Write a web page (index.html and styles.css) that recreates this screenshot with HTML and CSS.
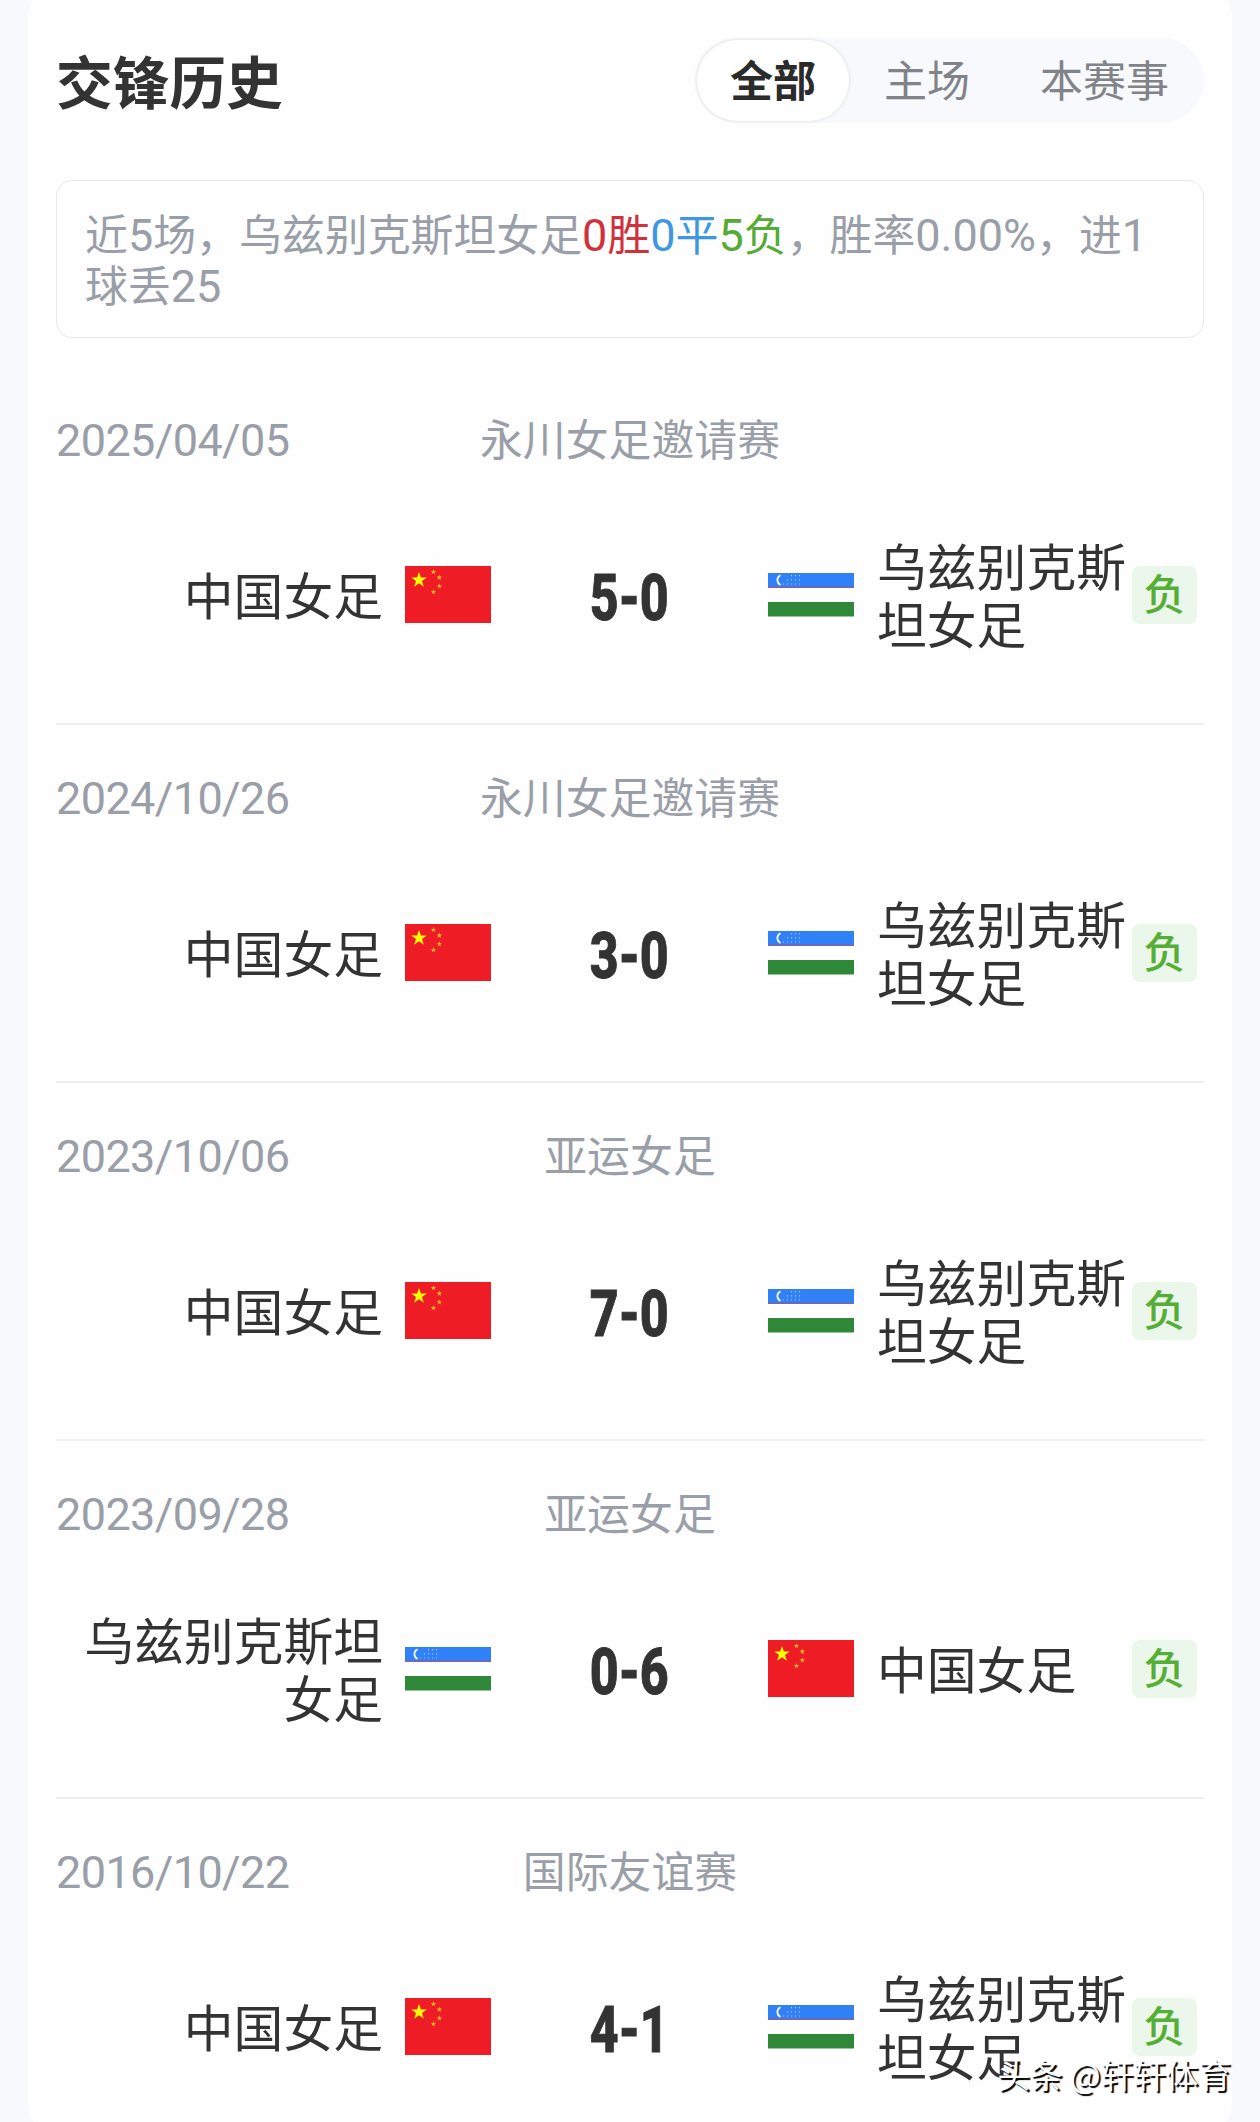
FILE: index.html
```html
<!DOCTYPE html>
<html lang="zh-CN">
<head>
  <meta charset="UTF-8" />
  <meta name="viewport" content="width=device-width, initial-scale=1.0"/>
  <title>交锋历史</title>
  <link rel="stylesheet" href="styles.css">
</head>
<body>

  <!-- Flags, reused in every match row -->
  <svg class="sprite" aria-hidden="true">
    <symbol id="flag-cn" viewBox="0 0 86 57">
      <rect width="86" height="57" fill="#ee1c25"/>
      <g fill="#ffff00">
        <path d="M14 6 15.9 11.6 21.8 11.6 17 15 18.8 20.8 14 17.3 9.2 20.8 11 15 6.2 11.6 12.1 11.6z"/>
      </g>
      <g fill="#fbb52b">
        <path id="star" d="M28.5 3 29.2 5 31.3 5 29.6 6.3 30.2 8.3 28.5 7.1 26.8 8.3 27.4 6.3 25.7 5 27.8 5z"/>
        <use href="#star" x="5.8" y="5.6"/>
        <use href="#star" x="5.8" y="14.2"/>
        <use href="#star" y="20"/>
      </g>
    </symbol>
    <symbol id="flag-uz" viewBox="0 0 86 57">
      <rect width="86" height="57" fill="#fff"/>
      <rect y="7" width="86" height="14" fill="#3080f8"/>
      <rect y="20.5" width="86" height="1.5" fill="#7a62ae"/>
      <rect y="36" width="86" height="14.5" fill="#2f8837"/>
      <path d="M12.5 9.2A5.4 5.4 0 0 0 12.5 19" fill="none" stroke="#fff" stroke-width="1.7"/>
      <g stroke="#a8ccff" stroke-width="1.1" stroke-dasharray="1.2 3">
        <path d="M23.5 9v11M27.5 9v11M31.5 9v11M19.5 13.2v7M15.5 17.4v2"/>
      </g>
    </symbol>
  </svg>

  <div class="page">
    <section class="card">

      <!-- Title and filter -->
      <header class="card-header">
        <h2>交锋历史</h2>
        <nav class="tabs">
          <span class="tab active">全部</span>
          <span class="tab">主场</span>
          <span class="tab">本赛事</span>
        </nav>
      </header>

      <!-- Summary -->
      <p class="summary">近<span class="num">5</span>场，乌兹别克斯坦女足<span class="win"><span class="num">0</span>胜</span><span class="draw"><span class="num">0</span>平</span><span class="lose"><span class="num">5</span>负</span>，胜率<span class="num">0.00%</span>，进<span class="num">1</span><br>球丢<span class="num">25</span></p>

      <!-- Matches -->
      <article class="match">
        <div class="match-info">
          <span class="date">2025/04/05</span>
          <span class="league">永川女足邀请赛</span>
        </div>
        <div class="match-row">
          <div class="team home"><span class="name">中国女足</span><svg class="flag"><use href="#flag-cn"/></svg></div>
          <div class="score"><span>5-0</span></div>
          <div class="team away"><svg class="flag"><use href="#flag-uz"/></svg><span class="name">乌兹别克斯坦女足</span></div>
          <span class="result">负</span>
        </div>
      </article>

      <article class="match">
        <div class="match-info">
          <span class="date">2024/10/26</span>
          <span class="league">永川女足邀请赛</span>
        </div>
        <div class="match-row">
          <div class="team home"><span class="name">中国女足</span><svg class="flag"><use href="#flag-cn"/></svg></div>
          <div class="score"><span>3-0</span></div>
          <div class="team away"><svg class="flag"><use href="#flag-uz"/></svg><span class="name">乌兹别克斯坦女足</span></div>
          <span class="result">负</span>
        </div>
      </article>

      <article class="match">
        <div class="match-info">
          <span class="date">2023/10/06</span>
          <span class="league">亚运女足</span>
        </div>
        <div class="match-row">
          <div class="team home"><span class="name">中国女足</span><svg class="flag"><use href="#flag-cn"/></svg></div>
          <div class="score"><span>7-0</span></div>
          <div class="team away"><svg class="flag"><use href="#flag-uz"/></svg><span class="name">乌兹别克斯坦女足</span></div>
          <span class="result">负</span>
        </div>
      </article>

      <article class="match">
        <div class="match-info">
          <span class="date">2023/09/28</span>
          <span class="league">亚运女足</span>
        </div>
        <div class="match-row">
          <div class="team home"><span class="name">乌兹别克斯坦女足</span><svg class="flag"><use href="#flag-uz"/></svg></div>
          <div class="score"><span>0-6</span></div>
          <div class="team away"><svg class="flag"><use href="#flag-cn"/></svg><span class="name">中国女足</span></div>
          <span class="result">负</span>
        </div>
      </article>

      <article class="match">
        <div class="match-info">
          <span class="date">2016/10/22</span>
          <span class="league">国际友谊赛</span>
        </div>
        <div class="match-row">
          <div class="team home"><span class="name">中国女足</span><svg class="flag"><use href="#flag-cn"/></svg></div>
          <div class="score"><span>4-1</span></div>
          <div class="team away"><svg class="flag"><use href="#flag-uz"/></svg><span class="name">乌兹别克斯坦女足</span></div>
          <span class="result">负</span>
        </div>
      </article>

    </section>

    <div class="watermark">头条 @轩轩体育</div>
  </div>

</body>
</html>
```
FILE: styles.css
```css
* {
  margin: 0;
  padding: 0;
  box-sizing: border-box;
}

body {
  background-color: #f7f9fc;
  color: #333;
  font-family: 'Noto Sans CJK SC', sans-serif;
}

.sprite {
  position: absolute;
  width: 0;
  height: 0;
}

.page {
  position: relative;
  height: 2122px;
  padding: 0 28px;
  overflow: hidden;
}

/* the card runs a little past both ends of the page */
.card {
  height: 2146px;
  margin-top: -12px;
  padding: 50px 28px 0;
  background: #fefefe;
  border-radius: 28px;
}

/* Header */
.card-header {
  display: flex;
  justify-content: space-between;
  align-items: center;
  height: 85px;
  margin-bottom: 57px;
}

.card-header h2 {
  padding-bottom: 3px;
  font-size: 56.7px;
  font-weight: 700;
  line-height: 80px;
}

.tabs {
  display: flex;
  align-items: center;
  height: 85px;
  padding: 2px;
  border-radius: 43px;
  background: #f7f9fc;
}

.tab {
  height: 81px;
  padding: 0 35px;
  font-size: 43px;
  line-height: 77px;
  color: #808388;
}

.tab:last-child {
  padding-right: 33px;
}

.tab.active {
  padding: 0 33px;
  border-radius: 41px;
  background: #fff;
  color: #2b2b2b;
  font-weight: 700;
  box-shadow: 0 0 4px rgba(0, 0, 0, 0.12);
}

/* Summary */
.summary {
  height: 158px;
  margin-bottom: 29px;
  padding: 26px 28px;
  border: 1.5px solid #e9eaec;
  border-radius: 16px;
  color: #9a9ea8;
  font-size: 42.9px;
  line-height: 50px;
  white-space: nowrap;
}

.num,
.date {
  font-family: Roboto, sans-serif;
  font-size: 45px;
  line-height: 1;
}

.date {
  letter-spacing: -0.6px;
}

.win { color: #d0313a; }
.draw { color: #3d97e3; }
.lose { color: #55ab35; }

/* Match */
.match {
  height: 358px;
  padding-top: 40px;
  border-bottom: 2px solid #eeeff0;
}

.match:last-child {
  border-bottom: none;
}

.match-info {
  display: grid;
  grid-template-columns: 1fr auto 1fr;
  align-items: baseline;
  height: 60px;
  margin-bottom: 67px;
  color: #9a9ea8;
  font-size: 42.9px;
  line-height: 60px;
}

.match-row {
  display: flex;
  align-items: center;
  height: 120px;
}

.team {
  display: flex;
  align-items: center;
}

.home {
  width: 435px;
  gap: 22px;
  justify-content: flex-end;
  text-align: right;
}

.away {
  width: 364px;
  gap: 23px;
}

.name {
  padding-bottom: 2px;
  font-size: 49.8px;
  line-height: 58px;
}

.home .name {
  max-width: 327px;
}

.away .name {
  max-width: 254px;
}

.flag {
  flex: none;
  width: 86px;
  height: 57px;
}

.score {
  width: 277px;
  padding-top: 8px;
  text-align: center;
  font-family: Roboto, sans-serif;
  font-size: 65px;
  font-weight: 800;
  line-height: 70px;
}

.score span {
  display: inline-block;
  transform: scaleX(0.77);
  -webkit-text-stroke: 1px #333;
}

.result {
  width: 65px;
  height: 58px;
  margin-top: 1px;
  border-radius: 8px;
  background: #ebf7ea;
  color: #55ae35;
  font-size: 42px;
  font-weight: 500;
  line-height: 52px;
  text-align: center;
}

.watermark {
  position: absolute;
  right: 29px;
  top: 2051px;
  color: #fff;
  font-size: 32.6px;
  line-height: 46px;
  text-shadow: 2px 2px 1px #000;
  white-space: nowrap;
}
```
